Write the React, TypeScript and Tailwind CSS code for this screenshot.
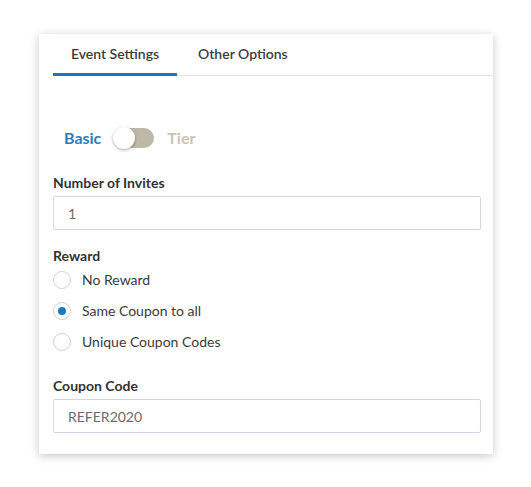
import React, { useState } from 'react';

type RewardOption = 'none' | 'same' | 'unique';

const rewardOptions: { value: RewardOption; label: string }[] = [
  { value: 'none', label: 'No Reward' },
  { value: 'same', label: 'Same Coupon to all' },
  { value: 'unique', label: 'Unique Coupon Codes' }
];

const Radio: React.FC<{ checked: boolean; label: string; onSelect: () => void }> = ({
  checked,
  label,
  onSelect
}) => (
  <button
    type="button"
    onClick={onSelect}
    className="flex items-center h-[31px] text-left"
  >
    <span className="w-[18px] h-[18px] rounded-full border border-[#d2d2d2] bg-white flex items-center justify-center">
      {checked && <span className="w-[8px] h-[8px] rounded-full bg-[#1b7ac2]" />}
    </span>
    <span className="ml-[11px] text-[14px] text-[#3a3a3a]">{label}</span>
  </button>
);

export default function App() {
  const [tab, setTab] = useState<'event' | 'other'>('event');
  const [tier, setTier] = useState(false);
  const [reward, setReward] = useState<RewardOption>('same');
  const [invites, setInvites] = useState('1');
  const [coupon, setCoupon] = useState('REFER2020');

  return (
    <div className="w-[531px] h-[487px] bg-white pt-[34px] pl-[39px] font-['Lato','Open_Sans',sans-serif]">
      <div className="w-[454px] bg-white shadow-[0_2px_9px_rgba(0,0,0,0.22)] pb-[21px]">
        <div className="ml-[14px] flex border-b border-[#e3e3e3]">
          <button
            type="button"
            onClick={() => setTab('event')}
            className={`h-[42px] w-[124px] text-[14px] font-semibold text-[#3c3c3c] border-b-[3px] -mb-px ${
              tab === 'event' ? 'border-[#1b75bb]' : 'border-transparent'
            }`}
          >
            Event Settings
          </button>
          <button
            type="button"
            onClick={() => setTab('other')}
            className={`h-[42px] px-[21px] text-[14px] font-semibold text-[#3c3c3c] border-b-[3px] -mb-px ${
              tab === 'other' ? 'border-[#1b75bb]' : 'border-transparent'
            }`}
          >
            Other Options
          </button>
        </div>

        <div className="pl-[14px] pr-[12px] flex flex-col">
          <div className="mt-[51px] ml-[11px] flex items-center h-[21px]">
            <span className={`text-[16px] font-bold ${tier ? 'text-[#c9c5b6]' : 'text-[#2b7bbd]'}`}>Basic</span>
            <button
              type="button"
              onClick={() => setTier(!tier)}
              className="ml-[13px] relative w-[40px] h-[20px] rounded-full bg-[#bdb9a6]"
            >
              <span
                className={`absolute top-1/2 -translate-y-1/2 w-[22px] h-[22px] rounded-full bg-white shadow-[0_1px_3px_rgba(0,0,0,0.35)] ${
                  tier ? 'left-[19px]' : '-left-px'
                }`}
              />
            </button>
            <span className={`ml-[13px] text-[16px] font-bold ${tier ? 'text-[#2b7bbd]' : 'text-[#c9c5b6]'}`}>Tier</span>
          </div>

          <label className="mt-[26px] text-[14px] font-bold text-[#333] leading-[17px]">Number of Invites</label>
          <input
            value={invites}
            onChange={(e) => setInvites(e.target.value)}
            className="mt-[5px] h-[34px] w-full border border-[#cfd8e2] rounded-[2px] px-[14px] text-[14px] text-[#6b6b6b] outline-none"
          />

          <label className="mt-[17px] text-[14px] font-bold text-[#333] leading-[17px]">Reward</label>
          <div className="flex flex-col">
            {rewardOptions.map((opt) => (
              <Radio
                key={opt.value}
                checked={reward === opt.value}
                label={opt.label}
                onSelect={() => setReward(opt.value)}
              />
            ))}
          </div>

          <label className="mt-[20px] text-[14px] font-bold text-[#333] leading-[17px]">Coupon Code</label>
          <input
            value={coupon}
            onChange={(e) => setCoupon(e.target.value)}
            className="mt-[5px] h-[34px] w-full border border-[#cfd8e2] rounded-[2px] px-[14px] text-[14px] text-[#6b6b6b] outline-none"
          />
        </div>
      </div>
    </div>
  );
}
